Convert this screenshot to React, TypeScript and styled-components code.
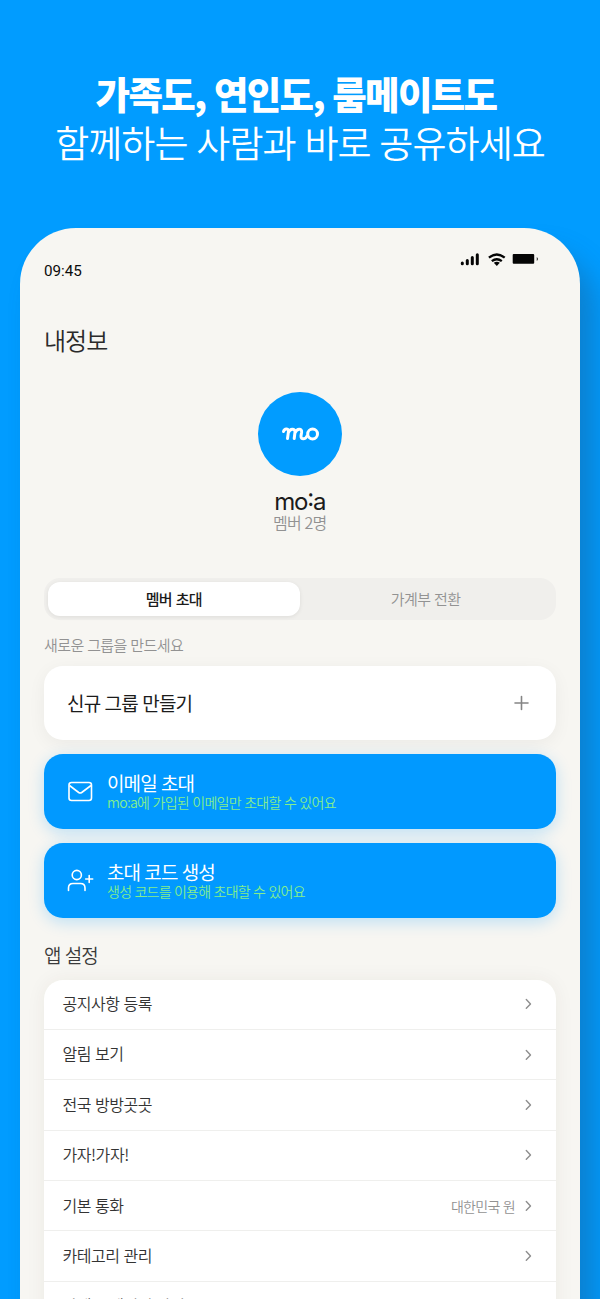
import React from "react";
import styled, { createGlobalStyle } from "styled-components";

const Global = createGlobalStyle`
  *, *::before, *::after { box-sizing: border-box; }
  html, body { margin: 0; height: 1299px; overflow: hidden; background: #019cff; }
  body { font-family: "Noto Sans CJK KR", "Noto Sans", sans-serif; }
`;

const Page = styled.div`
  height: 1299px;
  overflow: hidden;
  background: #019cff;
  display: flex;
  flex-direction: column;
  align-items: center;
`;

const Hero = styled.header`
  height: 228px;
  flex: none;
  padding-top: 69px;
  color: #fff;
  display: flex;
  flex-direction: column;
  align-items: center;
`;

const HeroLine = styled.div<{ $size: number; $weight: number; $track: number; $shift?: number }>`
  height: 48.5px;
  line-height: 48px;
  white-space: nowrap;
  font-size: ${(p) => p.$size}px;
  font-weight: ${(p) => p.$weight};
  letter-spacing: ${(p) => p.$track}px;
  word-spacing: 1.5px;
  margin-right: ${(p) => p.$shift ?? 0}px;
`;

const Phone = styled.main`
  width: 560px;
  height: 1180px;
  flex: none;
  background: #f7f6f2;
  border-radius: 56px 56px 0 0;
  padding: 0 24.5px 0 24px;
  box-shadow: 16px 24px 26px rgba(28, 90, 140, 0.4);
  display: flex;
  flex-direction: column;
`;

const StatusBar = styled.div`
  height: 90px;
  flex: none;
  display: flex;
  justify-content: space-between;
  padding: 24px 16px 0 0;
`;

const Clock = styled.span`
  font: 400 15.2px/38px Roboto, sans-serif;
  color: #0b0b0b;
`;

const StatusIcons = styled.svg`
  width: 80px;
  height: 16px;
  display: block;
`;

const Label = styled.span<{
  $size: number;
  $line: number;
  $color: string;
  $weight?: number;
  $track?: number;
}>`
  display: block;
  white-space: nowrap;
  font-size: ${(p) => p.$size}px;
  line-height: ${(p) => p.$line}px;
  color: ${(p) => p.$color};
  font-weight: ${(p) => p.$weight ?? 350};
  letter-spacing: ${(p) => p.$track ?? 0}px;
  word-spacing: 0.8px;
`;

const PageTitle = styled(Label)`
  margin: 0;
`;

const GroupHint = styled(Label)`
  margin: 11px 0 7px;
`;

const SettingsTitle = styled(Label)`
  margin: 8px 0 9.5px;
`;

const Profile = styled.section`
  height: 186px;
  flex: none;
  margin-top: 30px;
  display: flex;
  flex-direction: column;
  align-items: center;
`;

const Avatar = styled.div`
  width: 84px;
  height: 84px;
  border-radius: 50%;
  background: #019cff;
  display: grid;
  place-items: center;
  margin-bottom: 12px;
`;

const GroupName = styled.div`
  display: flex;
  font: 400 24px/28px Inter, sans-serif;
  letter-spacing: -1.2px;
  color: #1b1b1b;
  height: 26px;
`;

const RaisedColon = styled.span`
  margin-top: -4px;
`;

const Segments = styled.div`
  height: 42px;
  flex: none;
  border-radius: 16px;
  background: #f0efec;
  padding: 4px;
  display: flex;
`;

const Segment = styled.button<{ $active?: boolean }>`
  flex: 1;
  border: 0;
  padding: 0;
  border-radius: 12px;
  background: ${(p) => (p.$active ? "#fff" : "transparent")};
  box-shadow: ${(p) => (p.$active ? "0 1px 4px rgba(0, 0, 0, 0.08)" : "none")};
  font-family: inherit;
`;

const Card = styled.button<{ $blue?: boolean }>`
  height: ${(p) => (p.$blue ? 75 : 74)}px;
  flex: none;
  border: 0;
  border-radius: 19px;
  background: ${(p) => (p.$blue ? "#0199ff" : "#fff")};
  box-shadow: ${(p) =>
    p.$blue ? "0 4px 16px rgba(1, 153, 255, 0.24)" : "0 4px 18px rgba(0, 0, 0, 0.05)"};
  margin-bottom: 14px;
  padding: 0 24px 0 23px;
  display: flex;
  align-items: center;
  text-align: left;
  font-family: inherit;
  justify-content: ${(p) => (p.$blue ? "flex-start" : "space-between")};
`;

const CardCopy = styled.span`
  display: flex;
  flex-direction: column;
  margin-left: 13px;
`;

const List = styled.div`
  background: #fff;
  border-radius: 19px 19px 0 0;
  box-shadow: 0 0 20px rgba(60, 50, 20, 0.06);
  height: 380px;
  flex: none;
`;

const Row = styled.div`
  height: 50.4px;
  border-bottom: 1.5px solid #efefed;
  padding: 0 20.5px 0 18.5px;
  display: flex;
  align-items: center;
  justify-content: space-between;
`;

const RowName = styled(Label)`
  padding-bottom: 2.5px;
`;

const RowEnd = styled.span`
  display: flex;
  align-items: center;
  gap: 8px;
`;

const Chevron = () => (
  <svg width="12" height="14" viewBox="0 0 12 14" fill="none" stroke="#8e8e8e" strokeWidth="1.4">
    <path d="M3.3 2.6 7.5 6.9 3.3 11.2" strokeLinecap="round" strokeLinejoin="round" />
  </svg>
);

const rows: { name: string; value?: string }[] = [
  { name: "공지사항 등록" },
  { name: "알림 보기" },
  { name: "전국 방방곳곳" },
  { name: "가자!가자!" },
  { name: "기본 통화", value: "대한민국 원" },
  { name: "카테고리 관리" },
  { name: "가계부 데이터 관리" },
];

export default function App() {
  return (
    <Page>
      <Global />
      <Hero>
        <HeroLine $size={37.5} $weight={800} $track={-1.68} $shift={8}>
          가족도, 연인도, 룸메이트도
        </HeroLine>
        <HeroLine $size={37} $weight={350} $track={-0.95}>
          함께하는 사람과 바로 공유하세요
        </HeroLine>
      </Hero>
      <Phone>
        <StatusBar>
          <Clock>09:45</Clock>
          <StatusIcons viewBox="460 252 80 16">
            <g stroke="#050505" strokeWidth="3" strokeLinecap="round">
              <path d="M462.3 263v.8M467.3 260.5v3.3M472.3 257.5v6.3M477.3 254.8v9" />
            </g>
            <g fill="none" stroke="#050505" strokeWidth="2.3">
              <path d="M488.9 257.7q7.9-6.4 15.8 0M491.8 261.2q5-4 10 0" />
            </g>
            <path d="M493.8 262.7q3-1.9 6 0L496.8 266Z" fill="#050505" />
            <rect x="512.7" y="254" width="21.5" height="9.8" rx="1" fill="#050505" />
            <path d="M536.8 257q2 2 0 4Z" fill="#050505" />
          </StatusIcons>
        </StatusBar>
        <PageTitle as="h1" $size={24} $line={44} $color="#2a2a2a" $track={-1}>
          내정보
        </PageTitle>
        <Profile>
          <Avatar>
            <svg
              width="40"
              height="18"
              viewBox="0 0 40 18"
              fill="none"
              stroke="#fff"
              strokeWidth="3"
              strokeLinecap="round"
              strokeLinejoin="round"
            >
              <path d="M3.5 6.5C4.5 3.5 8.3 3 8.5 6.2L7.5 13.5M8.3 7.8C10 3 15.4 3 15 7.3L14.2 13.5M15 7.8C17 3 22.2 3 21.6 7.3L21 11C20.7 15 25.5 14.5 27 11" />
              <circle cx="32.6" cy="9" r="4.9" />
            </svg>
          </Avatar>
          <GroupName>
            mo<RaisedColon>:</RaisedColon>a
          </GroupName>
          <Label $size={16} $line={17} $color="#929292" $track={-0.8}>
            멤버 2명
          </Label>
        </Profile>
        <Segments>
          <Segment $active>
            <Label $size={15} $line={34} $color="#1b1b1b" $weight={500} $track={-0.6}>
              멤버 초대
            </Label>
          </Segment>
          <Segment>
            <Label $size={15} $line={34} $color="#929292" $track={-0.6}>
              가계부 전환
            </Label>
          </Segment>
        </Segments>
        <GroupHint $size={15} $line={28} $color="#929292" $track={-0.6}>
          새로운 그룹을 만드세요
        </GroupHint>
        <Card>
          <Label $size={19} $line={30} $color="#1b1b1b" $weight={400} $track={-0.8}>
            신규 그룹 만들기
          </Label>
          <svg width="20" height="20" viewBox="0 0 20 20" stroke="#858585" strokeWidth="1.6">
            <path d="M9.5 3.5v13M3 10h13" strokeLinecap="round" />
          </svg>
        </Card>
        <Card $blue>
          <svg
            width="27"
            height="27"
            viewBox="0 0 27 27"
            fill="none"
            stroke="#fff"
            strokeWidth="1.6"
            strokeLinejoin="round"
          >
            <rect x="2" y="4.5" width="22.5" height="18" rx="2.5" />
            <path d="m2.5 7.5 9.2 7q1.5 1 3 0l9.3-7" />
          </svg>
          <CardCopy>
            <Label $size={19} $line={21} $color="#fff" $weight={400} $track={-0.9}>
              이메일 초대
            </Label>
            <Label $size={14} $line={18} $color="#84ee8c" $track={-0.7}>
              mo:a에 가입된 이메일만 초대할 수 있어요
            </Label>
          </CardCopy>
        </Card>
        <Card $blue>
          <svg
            width="27"
            height="27"
            viewBox="0 0 27 27"
            fill="none"
            stroke="#fff"
            strokeWidth="1.6"
            strokeLinecap="round"
            strokeLinejoin="round"
          >
            <circle cx="9.8" cy="8" r="4.6" />
            <path d="M1.5 23.5V21c0-3 2-4.5 4.500-4.500h7.500c2.500 0 4.500 1.500 4.500 4.500v2.500M22.200 8.500v7M18.700 12h7" />
          </svg>
          <CardCopy>
            <Label $size={19} $line={21} $color="#fff" $weight={400} $track={-0.9}>
              초대 코드 생성
            </Label>
            <Label $size={14} $line={18} $color="#84ee8c" $track={-0.75}>
              생성 코드를 이용해 초대할 수 있어요
            </Label>
          </CardCopy>
        </Card>
        <SettingsTitle as="h2" $size={19} $line={30} $color="#3a3a3a" $track={-0.9}>
          앱 설정
        </SettingsTitle>
        <List>
          {rows.map((row) => (
            <Row key={row.name}>
              <RowName $size={16} $line={28} $color="#333" $track={-0.45}>
                {row.name}
              </RowName>
              <RowEnd>
                {row.value && (
                  <Label $size={14} $line={28} $color="#929292" $track={-0.7}>
                    {row.value}
                  </Label>
                )}
                <Chevron />
              </RowEnd>
            </Row>
          ))}
        </List>
      </Phone>
    </Page>
  );
}
